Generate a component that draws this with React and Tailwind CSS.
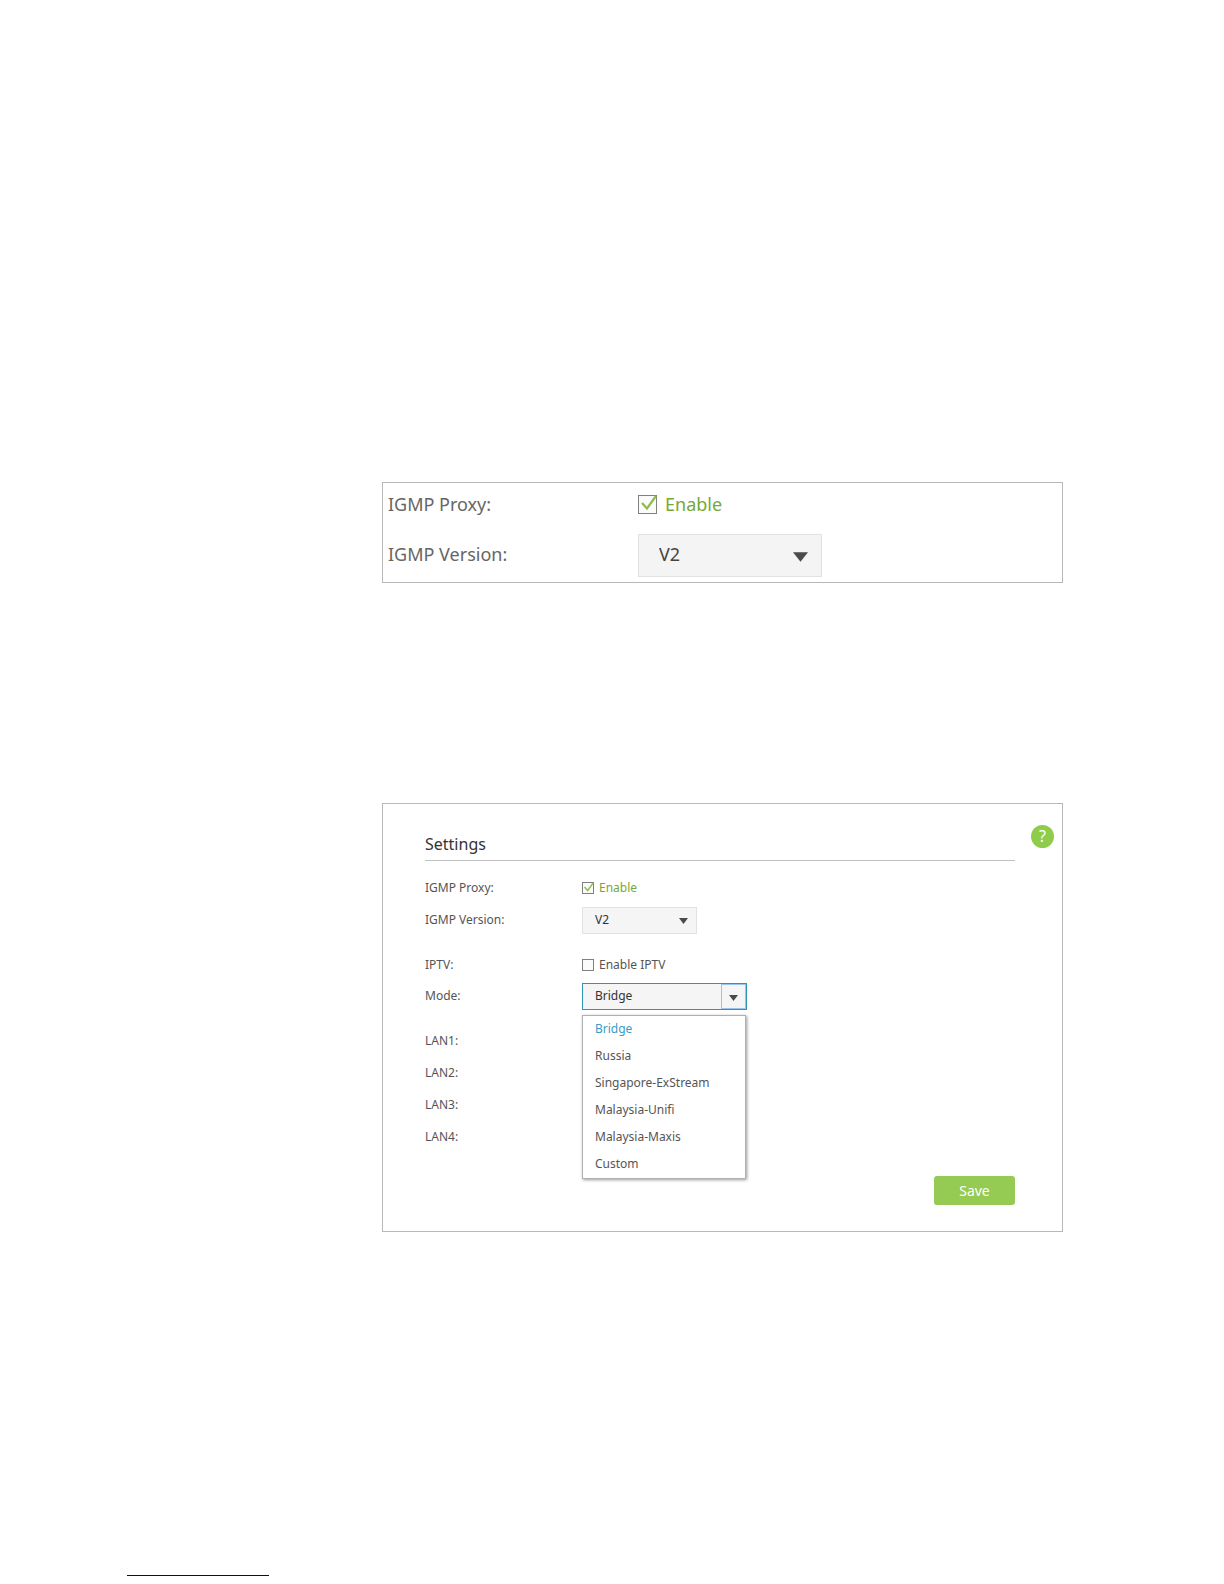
import React, {useState} from "react";

const modes = ["Bridge", "Russia", "Singapore-ExStream", "Malaysia-Unifi", "Malaysia-Maxis", "Custom"];
const lanPorts = ["LAN1:", "LAN2:", "LAN3:", "LAN4:"];

const Arrow = ({className}) => (
    <svg viewBox="0 0 14 9" className={`pointer-events-none absolute fill-[#4a4a4a] ${className}`} aria-hidden="true">
        <path d="M0 0H14L7 9Z"/>
    </svg>
);

const CheckBox = ({id, checked, onChange, large}) => (
    <span className={`relative flex shrink-0 ${large ? "size-[19px]" : "size-3"}`}>
        <input
            id={id}
            type="checkbox"
            checked={checked}
            onChange={onChange}
            className="size-full appearance-none border border-[#808080] bg-[#fbfbfb]"
        />
        {checked &&
            <svg viewBox="0 0 19 19" className="pointer-events-none absolute inset-0 size-full overflow-visible" aria-hidden="true">
                <path d="M4 8L9 13.500L18 1" fill="none" stroke="#8fbb4a" strokeWidth="2.200"/>
            </svg>
        }
    </span>
);

const Row = ({label, htmlFor, children}) => (
    <div className="flex h-7 items-center">
        <label htmlFor={htmlFor} className="w-[157px] shrink-0">{label}</label>
        {children}
    </div>
);

const ProxyCard = () => {
    const [proxy, setProxy] = useState(true);

    return (
        <section className="border border-[#b8b8b8] pt-[9px] pb-[5px] pl-[5px] text-[18px] leading-6 text-[#666666]">
            <div className="flex h-6 items-center">
                <span className="w-[250px] shrink-0">IGMP Proxy:</span>
                <CheckBox id="proxy-large" checked={proxy} onChange={() => setProxy(!proxy)} large/>
                <label htmlFor="proxy-large" className="ml-2 text-[#76a832]">Enable</label>
            </div>
            <div className="mt-[18px] flex items-center">
                <label htmlFor="version-large" className="w-[250px] shrink-0 pb-1">IGMP Version:</label>
                <div className="relative w-[184px]">
                    <select
                        id="version-large"
                        defaultValue="V2"
                        className="block h-[43px] w-full appearance-none border border-[#e2e2e2] bg-[#f4f4f4] pb-1 pl-5 text-[#444444]"
                    >
                        <option>V2</option>
                        <option>V3</option>
                    </select>
                    <Arrow className="top-[18px] right-[14px] h-[10px] w-[15px]"/>
                </div>
            </div>
        </section>
    );
};

const SettingsCard = () => {
    const [proxy, setProxy] = useState(true);
    const [iptv, setIptv] = useState(false);
    const [mode, setMode] = useState("Bridge");
    const [open, setOpen] = useState(true);

    const selectMode = (item) => {
        setMode(item);
        setOpen(false);
    };

    return (
        <section className="flex items-start border border-[#b8b8b8] pb-[26px] pl-[42px] text-[12px] leading-5 text-[#555555]">
            <div className="flex-1 pt-7">
                <h2 className="border-b border-[#c0c0c0] pb-1 text-[16px] leading-6 text-[#333333]">Settings</h2>

                <form className="mt-[13px] flex flex-col gap-[17px]" onSubmit={(e) => e.preventDefault()}>
                    <div className="flex flex-col gap-1">
                        <Row label="IGMP Proxy:" htmlFor="proxy">
                            <CheckBox id="proxy" checked={proxy} onChange={() => setProxy(!proxy)}/>
                            <label htmlFor="proxy" className="ml-[5px] text-[#76a832]">Enable</label>
                        </Row>
                        <Row label="IGMP Version:" htmlFor="version">
                            <div className="relative w-[115px]">
                                <select
                                    id="version"
                                    defaultValue="V2"
                                    className="block h-[27px] w-full appearance-none border border-[#e2e2e2] bg-[#f5f5f5] pl-3 text-[#333333]"
                                >
                                    <option>V2</option>
                                    <option>V3</option>
                                </select>
                                <Arrow className="top-[11px] right-[9px] h-[6px] w-[9px]"/>
                            </div>
                        </Row>
                    </div>

                    <div className="flex flex-col gap-[3px]">
                        <Row label="IPTV:" htmlFor="iptv">
                            <CheckBox id="iptv" checked={iptv} onChange={() => setIptv(!iptv)}/>
                            <label htmlFor="iptv" className="ml-[5px]">Enable IPTV</label>
                        </Row>
                        <Row label="Mode:" htmlFor="mode">
                            <div className="relative w-[165px]">
                                <select
                                    id="mode"
                                    value={mode}
                                    onChange={(e) => setMode(e.target.value)}
                                    onMouseDown={(e) => {
                                        e.preventDefault();
                                        setOpen(!open);
                                    }}
                                    className="block h-[27px] w-full appearance-none border border-[#2f93b5] bg-[#f5f5f5] pl-3 text-[#333333]"
                                >
                                    {modes.map((item) => <option key={item}>{item}</option>)}
                                </select>
                                <span className="pointer-events-none absolute inset-y-px right-px w-[25px] border border-[#9cc3f0]"/>
                                <Arrow className="top-[12px] right-[9px] h-[6px] w-[9px]"/>
                                {open &&
                                    <ul
                                        role="listbox"
                                        aria-label="Mode"
                                        className="absolute top-8 left-0 z-10 w-[164px] border border-[#b0b0b0] bg-white shadow-[1px_1px_3px_rgba(0,0,0,0.4)]"
                                    >
                                        {modes.map((item) => (
                                            <li
                                                key={item}
                                                role="option"
                                                aria-selected={item === mode}
                                                onClick={() => selectMode(item)}
                                                className={`h-[27px] cursor-pointer pl-3 leading-[25px] ${item === mode ? "text-[#3a9cc4]" : ""}`}
                                            >
                                                {item}
                                            </li>
                                        ))}
                                    </ul>
                                }
                            </div>
                        </Row>
                    </div>

                    <div className="flex flex-col gap-1">
                        {lanPorts.map((port) => (
                            <div key={port} className="flex h-7 items-center">{port}</div>
                        ))}
                    </div>

                    <button type="submit" className="mt-2 h-[29px] w-[81px] self-end rounded-[3px] bg-[#95cb52] text-[14px] text-white">
                        Save
                    </button>
                </form>
            </div>

            <button type="button" aria-label="Help" className="mt-[21px] mr-2 ml-4 size-[23px] rounded-full bg-[#90cc4b] text-[16px] leading-[23px] text-white">
                ?
            </button>
        </section>
    );
};

const App = () => (
    <div className="bg-white pb-2 font-['Noto_Sans',sans-serif]">
        <main className="flex flex-col gap-[220px] pt-[482px] pr-[161px] pl-[382px]">
            <ProxyCard/>
            <SettingsCard/>
        </main>
        <hr className="mt-[343px] ml-[127px] h-px w-[142px] border-0 bg-[#00008b]"/>
    </div>
);

export default App;
